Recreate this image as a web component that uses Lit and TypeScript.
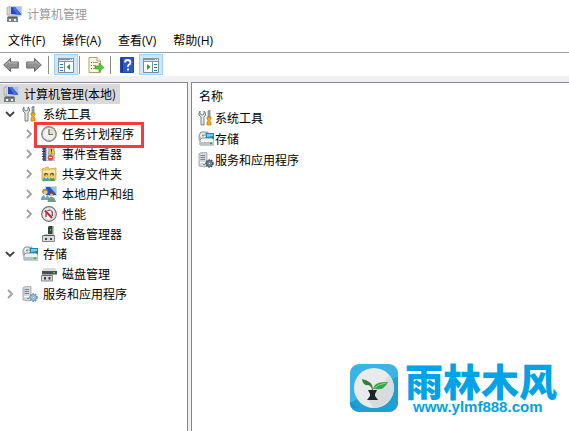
import { LitElement, html, css, svg, nothing, TemplateResult } from "lit";
import { customElement, property } from "lit/decorators.js";

const frame = (body: TemplateResult) =>
  html`<svg width="16" height="16" viewBox="0 0 16 16" aria-hidden="true">${body}</svg>`;

const serverBox = svg`
  <path d="M2 1 L8 0 L9 1 V14 L7 15 L1 14 V2Z" fill="#d3d8db" stroke="#8b959b" stroke-width=".7"/>
  <path d="M2.500 3.500H7M2.500 5.500H7M2.500 7.500H7" stroke="#78848b"/>
  <path d="M2 10.500H7" stroke="#fff"/><path d="M5 12h2v1H5z" fill="#41b64a"/>`;

const icons: Record<string, TemplateResult> = {
  computer: frame(svg`
    <path d="M1 1.500 L4 .5 V9 H1Z" fill="#ddd9cc" stroke="#9a9a92" stroke-width=".7"/>
    <path d="M4 0H16V10L12 11H4Z" fill="#cfd3d8"/><path d="M5 1H15V9L5 8Z" fill="#1f47c8"/>
    <path d="M9 1H15V8Z" fill="#a9c0f2"/><path d="M6 1H9L15 9 11 8.500Z" fill="#4a70de"/>
    <path d="M3 9.500h8l1 1.500H1z" fill="#c3c6c4"/><path d="M1 11H12V16H1Z" fill="#7d8280"/>
    <path d="M2 10.500H11V12H2Z" fill="#5a6062"/><path d="M3 13h2v2H3zM8 13h2v2H8z" fill="#f1f1ef"/>`),
  tools: frame(svg`
    <path d="M2 1 L2 4 L4 5 L6 4 V1 L7.500 3 V5 L6 7 V15 H3 V7 L1 5 V3Z" fill="#e5e8e9" stroke="#667079" stroke-width=".9"/>
    <path d="M10 1 L12 0 V7 H10Z" fill="#a6adb1" stroke="#606a70" stroke-width=".6"/>
    <path d="M9 7H13V9L12 10V11L13 12V15H9V12L10 11V10L9 9Z" fill="#f5ac16" stroke="#b97608" stroke-width=".7"/>`),
  clock: frame(svg`
    <circle cx="8" cy="8" r="7.300" fill="#c9c9c7" stroke="#808486" stroke-width="1.200"/>
    <circle cx="8" cy="8" r="5.600" fill="#f4f2ec" stroke="#f4f4f4" stroke-width=".6"/>
    <path d="M8 2.500 A5.500 5.500 0 0 1 13.500 8 H8Z" fill="#f3dfb4"/>
    <path d="M8 3V8.500H12" fill="none" stroke="#5e6a74" stroke-width="1.200"/>`),
  events: frame(svg`
    <path d="M2 1H14V15H2Z" fill="#4c66a0"/><path d="M5 1H14V15H5Z" fill="#b5c1d6"/>
    <path d="M1 3h3M1 5.500h3M1 8h3M1 10.500h3M1 13h3" stroke="#2b3850"/>
    <path d="M6.500 2V14" stroke="#e6ebf4"/>
    <path d="M10.500 1 L14 8H7Z" fill="#ffd52b" stroke="#c38f0c" stroke-width=".6"/>
    <path d="M10.500 3V6M10.500 6.500v1" stroke="#333"/>
    <circle cx="9.500" cy="11.700" r="2.800" fill="#dc4a4a"/><path d="M8 11.500h3" stroke="#fff"/>`),
  shared: frame(svg`
    <path d="M1 3L7 1 8 3 15 2V14L2 15 1 14Z" fill="#efcb6a" stroke="#c9a03c" stroke-width=".7"/>
    <path d="M2 5L14 4V7H2Z" fill="#fae9ad"/>
    <circle cx="5" cy="8.500" r="1.800" fill="#5c4a36"/><circle cx="11" cy="8.500" r="1.800" fill="#6e4b2f"/>
    <circle cx="5.300" cy="9.300" r="1.100" fill="#edbf98"/><circle cx="10.700" cy="9.300" r="1.100" fill="#edbf98"/>
    <path d="M1.500 15Q2 11 5 11T8 15Z" fill="#3fa4b1"/><path d="M8 15Q9 11 11 11T14 15Z" fill="#4f9d50"/>
    <path d="M4 11l1 2 1-2zM10 11l1 2 1-2z" fill="#fff"/>`),
  users: frame(svg`
    <path d="M4 0H16V10H4Z" fill="#d3d9e2"/>
    <path d="M5 1H15V9H5Z" fill="#2350cc"/><path d="M9 1H15V8Z" fill="#9dbdf5"/>
    <circle cx="4" cy="5.500" r="2.800" fill="#a98c4f"/><circle cx="4.600" cy="6.500" r="1.800" fill="#efc9a0"/>
    <path d="M0 14Q0 9 4 9T9 14Z" fill="#6fa3b8"/><path d="M3 9l1.500 3L6 9z" fill="#fff"/>
    <circle cx="10.500" cy="8" r="2.300" fill="#6b5232"/><circle cx="10.500" cy="9" r="1.600" fill="#e5bb94"/>
    <path d="M6.500 16Q7 11 10.500 11T15 16Z" fill="#6d9d86"/>`),
  perf: frame(svg`
    <circle cx="8" cy="8" r="7.300" fill="#f2f2f2" stroke="#6a6e70" stroke-width="1.200"/>
    <circle cx="8" cy="8" r="5.600" fill="#fff" stroke="#c4c6c8" stroke-width=".6"/>
    <path d="M5 11V6.500M6.500 4.500L9.500 4L11.500 6V10" fill="none" stroke="#5c2a2a" stroke-width="1"/>
    <path d="M4 4.500L11 12" stroke="#d01f27" stroke-width="2"/>
    <path d="M5 8V11M11 5V10" stroke="#d84d50"/>`),
  device: frame(svg`
    <path d="M7 1L8 0H12V9H7Z" fill="#3a3f41"/><path d="M11 0h1.500v9H11z" fill="#85898a"/>
    <path d="M9 3h1v2H9z" fill="#40d24d"/><path d="M4 8H13L14 10H2Z" fill="#c6c9c9"/>
    <path d="M1.500 9.500H13.500V15.500H1.500Z" fill="#d9dbdb" stroke="#85898a"/><path d="M2 9.500h11" stroke="#54595b"/>
    <path d="M4 12h2v2H4zM9 12h2v2H9z" fill="#3d4447"/>`),
  storage: frame(svg`
    <path d="M1 4L3 1H10V9H1Z" fill="#c8cfd2" stroke="#808b90" stroke-width=".7"/>
    <circle cx="5" cy="4.500" r="3.500" fill="#e7eeeb" stroke="#849096" stroke-width=".7"/>
    <circle cx="5" cy="4.500" r="1" fill="#758087"/><path d="M5 4.500L8 2V5Z" fill="#a1bd9a"/>
    <path d="M8 2H16V8H8Z" fill="#1688b5"/><path d="M9 3H15V5L9 6Z" fill="#76cce9"/>
    <path d="M2 9L4 7H14L16 9V14H2Z" fill="#f0f2f2" stroke="#727d82" stroke-width=".8"/>
    <path d="M2 11H16V14H2Z" fill="#b9c0c3"/><path d="M12 11.500h2v1.500h-2z" fill="#28ad3a"/>`),
  disk: frame(svg`
    <path d="M3 2H14L16 5H1Z" fill="#d8dbdb"/>
    <path d="M1 5H16V8.500H1Z" fill="#4a4f51"/><path d="M12 6h2v1h-2z" fill="#3ee04d"/>
    <path d="M.5 9.500H11.500V15H.5Z" fill="#d9dbdb" stroke="#85898a"/><path d="M1 9.500h10" stroke="#606567"/>
    <path d="M3 11h2v2.500H3zM7.500 11h2v2.500h-2z" fill="#353d42"/>`),
  services: frame(svg`${serverBox}
    <circle cx="11.500" cy="11.500" r="3.500" fill="#a8cae2" stroke="#628aa7" stroke-width="1.600" stroke-dasharray="1.500 1"/>
    <circle cx="11.500" cy="11.500" r="2.800" fill="#b9d6e8" stroke="#5d88a6" stroke-width=".7"/>
    <circle cx="11.500" cy="11.500" r="1.100" fill="#fff" stroke="#557b95" stroke-width=".6"/>`),
  servicesDark: frame(svg`${serverBox}
    <circle cx="11.500" cy="11.500" r="3.500" fill="#8496a5" stroke="#44596b" stroke-width="1.600" stroke-dasharray="1.500 1"/>
    <circle cx="11.500" cy="11.500" r="2.800" fill="#8b9dac" stroke="#3c5164"/>
    <circle cx="11.500" cy="11.500" r="1.100" fill="#fff" stroke="#344655" stroke-width=".6"/>`),
  back: frame(svg`<path d="M.7 8L7.500 1.500V5H15.300V11H7.500V14.500Z" fill="#919191" stroke="#686868"/><path d="M2.500 8L6.500 4V6H14.300" fill="none" stroke="#b8b8b8"/>`),
  forward: frame(svg`<path d="M15.300 8L8.500 1.500V5H.7V11H8.500V14.500Z" fill="#919191" stroke="#686868"/><path d="M1.700 6H9.500V4L13.500 8" fill="none" stroke="#b8b8b8"/>`),
  treePane: frame(svg`
    <path d="M.5 1.500H15.500V15.500H.5Z" fill="#fff" stroke="#838b91"/><path d="M0 1H16V5H0Z" fill="#87929a"/>
    <path d="M1 3.500H15" stroke="#dce5ea"/><path d="M12 2h1v1h-1zM14 2h1v1h-1z" fill="#fff"/>
    <path d="M6.500 5V15" stroke="#838b91"/><path d="M2 7.500H5M2 10.500H5M2 13.500H5" stroke="#2777c4"/>
    <path d="M12 7V13L8.500 10Z" fill="#20a635"/>`),
  actionPane: frame(svg`
    <path d="M.5 1.500H15.500V15.500H.5Z" fill="#fff" stroke="#838b91"/><path d="M0 1H16V5H0Z" fill="#87929a"/>
    <path d="M1 3.500H15" stroke="#dce5ea"/><path d="M12 2h1v1h-1zM14 2h1v1h-1z" fill="#fff"/>
    <path d="M9.500 5V15" stroke="#838b91"/><path d="M11 7.500H14M11 10.500H14M11 13.500H14" stroke="#2777c4"/>
    <path d="M4 7V13L7.500 10Z" fill="#20a635"/>`),
  exportList: frame(svg`
    <path d="M1 .5H9L12.500 4V15.500H1Z" fill="#fff9dc" stroke="#a99e78"/><path d="M9 .5V4H12.500" fill="#fff" stroke="#a99e78"/>
    <path d="M3 5.500h1M3 8.500h1M3 11.500h1" stroke="#555"/><path d="M5 5.500h5M5 8.500h3M5 11.500h3" stroke="#a092aa"/>
    <path d="M7 9H11V6L16 10.500L11 15V12H7Z" fill="#55c732" stroke="#349923" stroke-width=".6"/>`),
  help: frame(svg`
    <path d="M1.500 .5H14.500V15.500H1.500Z" fill="#2e59c5" stroke="#24489f"/><path d="M2 1h2v14H2z" fill="#1a3a93"/>
    <path d="M6 5.500Q6 3 8.700 3T11.400 5.400Q11.400 7 9.800 7.800Q8.900 8.300 8.900 10" fill="none" stroke="#fff" stroke-width="1.800"/>
    <path d="M8 11.500h2v2H8z" fill="#fff"/>`),
};

interface Entry {
  label: string;
  icon: string;
  level: number;
  open?: boolean;
  selected?: boolean;
  marked?: boolean;
}

const tree: Entry[] = [
  { label: "计算机管理(本地)", icon: "computer", level: 0, selected: true },
  { label: "系统工具", icon: "tools", level: 1, open: true },
  { label: "任务计划程序", icon: "clock", level: 2, open: false, marked: true },
  { label: "事件查看器", icon: "events", level: 2, open: false },
  { label: "共享文件夹", icon: "shared", level: 2, open: false },
  { label: "本地用户和组", icon: "users", level: 2, open: false },
  { label: "性能", icon: "perf", level: 2, open: false },
  { label: "设备管理器", icon: "device", level: 2 },
  { label: "存储", icon: "storage", level: 1, open: true },
  { label: "磁盘管理", icon: "disk", level: 2 },
  { label: "服务和应用程序", icon: "services", level: 1, open: false },
];

const reset = css`
  button {
    font: inherit;
    color: inherit;
    background: none;
    border: 0;
    margin: 0;
    padding: 0;
    white-space: nowrap;
  }
  svg { display: block; flex: none; }
`;

@customElement("tree-row")
class TreeRow extends LitElement {
  @property({ attribute: false }) entry!: Entry;

  static styles = [reset, css`
    :host { display: block; height: 20px; }
    .row { display: inline-flex; align-items: center; gap: 5px; height: 20px; padding: 0 4px 0 3px; position: relative; }
    .level2 { padding-left: 22px; }
    .selected { background: #d9d9d9; }
    .twisty { width: 14px; height: 16px; display: grid; place-items: center; }
    .twisty path { fill: none; stroke: #a0a0a0; stroke-width: 1.8; }
    .twisty .down { stroke: #404040; }
    .marked::after {
      content: "";
      position: absolute;
      inset: -2px -6px -4px 34px;
      border: 3px solid #fa3a3a;
      z-index: 1;
    }
  `];

  render() {
    const e = this.entry;
    const cls = `row level${e.level} ${e.selected ? "selected" : ""} ${e.marked ? "marked" : ""}`;
    return html`<button class=${cls} role="treeitem" aria-level=${e.level + 1}
      aria-selected=${e.selected ? "true" : "false"}
      aria-expanded=${e.open === undefined ? nothing : String(e.open)}>
      ${e.level === 0 ? nothing : html`<span class="twisty">${
        e.open === undefined ? nothing : html`<svg width="10" height="10" viewBox="0 0 10 10" aria-hidden="true">${
          e.open ? svg`<path class="down" d="M1 3L5 7L9 3"/>` : svg`<path d="M3 1L7 5L3 9"/>`}</svg>`
      }</span>`}
      ${icons[e.icon]}<span>${e.label}</span>
    </button>`;
  }
}

@customElement("brand-mark")
class BrandMark extends LitElement {
  static styles = css`
    :host { display: flex; align-items: center; gap: 7px; color: #00a2e8; }
    svg { display: block; flex: none; }
    .words { display: flex; flex-direction: column; align-items: flex-start; }
    .name { font: 900 38px/38px "Noto Sans CJK SC", sans-serif; white-space: nowrap; }
    .site { font: bold 15px/16px "Liberation Sans", Arial, sans-serif; color: inherit; text-decoration: none; padding-left: 8px; }
  `;

  render() {
    return html`
      <svg width="48" height="48" viewBox="0 0 48 48" aria-hidden="true">
        <defs><clipPath id="tile"><rect width="48" height="48" rx="9"/></clipPath></defs>
        <g clip-path="url(#tile)">
          <path d="M0 0H48V48H0Z" fill="#3bb3e4"/>
          <path d="M0 39L48 12V48H0Z" fill="#1fa0d4"/>
          <path d="M0 38L8 44H0Z" fill="#1696c8"/>
        </g>
        <circle cx="24" cy="24" r="20" fill="#e9eaea"/>
        <path d="M39 11A20 20 0 0 1 24 44L18 36Z" fill="#d9dcdd"/>
        <path d="M23 26Q23 17 12 15Q13 22 18 21Q22 22 22 27Z" fill="#2f7f3a"/>
        <path d="M23 25Q24 17 38 18Q34 27 25 25Z" fill="#35a84a"/>
        <path d="M24 24Q29 20 36 19" fill="none" stroke="#91cf89"/>
        <path d="M18 26H27L25 30V32L28 36H17L20 32V30Z" fill="#20252a"/>
      </svg>
      <div class="words">
        <span class="name">雨林木风</span>
        <a class="site" href="#">www.ylmf888.com</a>
      </div>`;
  }
}

@customElement("app-root")
class AppRoot extends LitElement {
  static styles = [reset, css`
    :host {
      display: flex;
      flex-direction: column;
      min-height: 100vh;
      box-sizing: border-box;
      overflow: hidden;
      background: #fff;
      color: #000;
      font: 12px/16px "Noto Sans CJK SC", sans-serif;
    }
    .title { display: flex; align-items: center; gap: 5px; height: 28px; padding-left: 6px; color: #999; }
    h1 { font: inherit; margin: 0; }
    .menu {
      display: flex; align-items: center; gap: 17px; height: 22px; padding: 2px 0 0 8px;
      font-family: "Open Sans", "Noto Sans CJK SC", sans-serif;
      border-bottom: 1px solid #a0a0a0;
    }
    .tools { display: flex; align-items: center; height: 23px; padding-left: 3px; }
    .tools button { display: grid; place-items: center; height: 21px; width: 16px; }
    .tools .forward { margin-left: 7px; }
    .tools .wide { width: 24px; background: #cce8ff; border: 1px solid #99d1ff; }
    .tools i { width: 1px; height: 18px; background: #8c8c8c; margin: 0 8px 0 6px; }
    .tools .first { margin-right: 5px; }
    .tools .snug { margin-left: 1px; }
    .tools .help { margin-right: 4px; }
    .body { flex: 1; display: grid; grid-template-columns: 188px 1fr; gap: 3px; background: #f0f0f0; padding-top: 6px; }
    .pane { background: #fff; border: 0 solid #828790; border-top-width: 1px; }
    .left { border-right-width: 1px; padding-top: 1px; }
    .right { border-left-width: 1px; padding: 3px 0 0 6px; display: flex; flex-direction: column; justify-content: space-between; }
    table { border-collapse: collapse; align-self: flex-start; }
    th, td { padding: 0; height: 21px; text-align: left; font-weight: normal; }
    th { padding: 0 0 2px 1px; box-sizing: border-box; }
    .item { display: flex; align-items: center; gap: 1px; }
    .brand { align-self: flex-end; margin: 0 12px 16px 0; }
  `];

  render() {
    return html`
      <header class="title">${icons.computer}<h1>计算机管理</h1></header>
      <nav class="menu" aria-label="菜单">
        ${["文件(F)", "操作(A)", "查看(V)", "帮助(H)"].map((m) => html`<button>${m}</button>`)}
      </nav>
      <div class="tools" role="toolbar">
        <button aria-label="后退">${icons.back}</button>
        <button class="forward" aria-label="前进">${icons.forward}</button>
        <i class="first"></i>
        <button class="wide" aria-label="控制台树">${icons.treePane}</button>
        <i class="snug"></i>
        <button aria-label="导出列表">${icons.exportList}</button>
        <i></i>
        <button class="help" aria-label="帮助">${icons.help}</button>
        <button class="wide" aria-label="操作窗格">${icons.actionPane}</button>
      </div>
      <main class="body">
        <section class="pane left" role="tree" aria-label="控制台树">
          ${tree.map((entry) => html`<tree-row .entry=${entry}></tree-row>`)}
        </section>
        <section class="pane right">
          <table>
            <thead><tr><th scope="col">名称</th></tr></thead>
            <tbody>
              ${[["系统工具", "tools"], ["存储", "storage"], ["服务和应用程序", "servicesDark"]].map(
                ([label, icon]) => html`<tr><td><span class="item">${icons[icon]}${label}</span></td></tr>`
              )}
            </tbody>
          </table>
          <brand-mark class="brand"></brand-mark>
        </section>
      </main>`;
  }
}
